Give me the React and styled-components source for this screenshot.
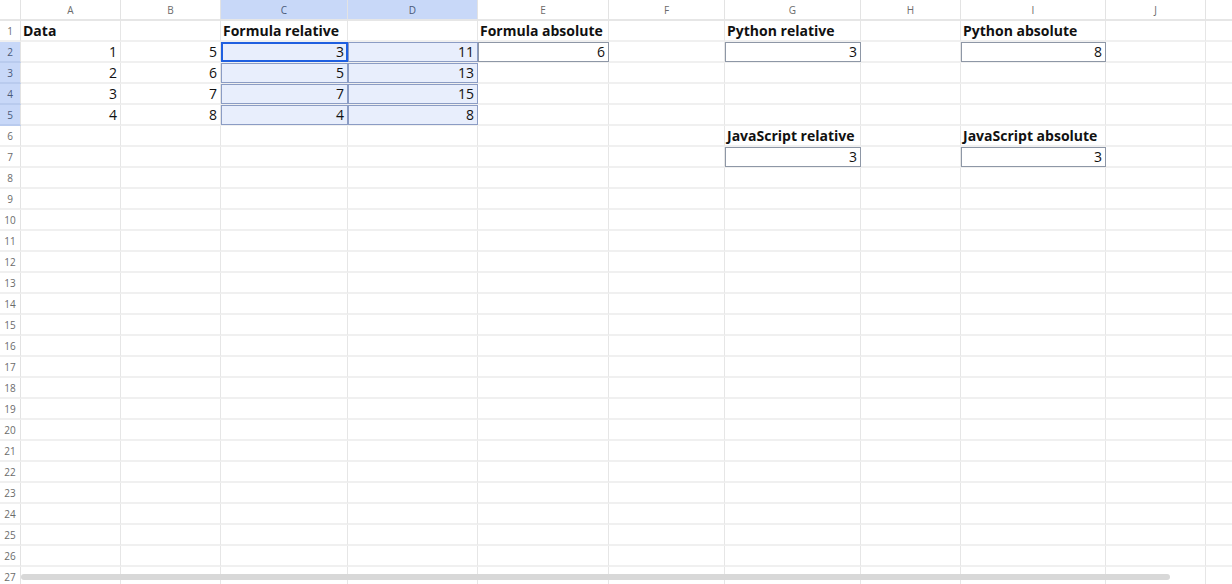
import React from 'react'
import styled, { createGlobalStyle } from 'styled-components'

const COLS = ['A', 'B', 'C', 'D', 'E', 'F', 'G', 'H', 'I', 'J', 'K']
const WIDTHS = [100, 100, 127, 130, 131, 116, 136, 100, 145, 100, 100]
const ROWS = 27
const SEL_COLS = ['C', 'D']
const SEL_ROWS = [2, 3, 4, 5]
// the header of K lies past the right edge of the window
const HIDDEN_LABELS = ['K']

// sheet contents, keyed by cell name
const cells = {
  A1: { v: 'Data', bold: true },
  C1: { v: 'Formula relative', bold: true },
  E1: { v: 'Formula absolute', bold: true },
  G1: { v: 'Python relative', bold: true },
  I1: { v: 'Python absolute', bold: true },
  A2: { v: 1 }, B2: { v: 5 }, C2: { v: 3, boxed: true }, D2: { v: 11, boxed: true },
  E2: { v: 6, boxed: true }, G2: { v: 3, boxed: true }, I2: { v: 8, boxed: true },
  A3: { v: 2 }, B3: { v: 6 }, C3: { v: 5, boxed: true }, D3: { v: 13, boxed: true },
  A4: { v: 3 }, B4: { v: 7 }, C4: { v: 7, boxed: true }, D4: { v: 15, boxed: true },
  A5: { v: 4 }, B5: { v: 8 }, C5: { v: 4, boxed: true }, D5: { v: 8, boxed: true },
  G6: { v: 'JavaScript relative', bold: true },
  I6: { v: 'JavaScript absolute', bold: true },
  G7: { v: 3, boxed: true }, I7: { v: 3, boxed: true },
}

const ACTIVE = 'C2'

function App() {
  const rows = Array.from({ length: ROWS }, (_, i) => i + 1)
  return (
    <>
      <GlobalStyle />
      <Sheet>
        <Grid>
          <Corner />
          {COLS.map((c) => (
            <ColHead key={c} $sel={SEL_COLS.includes(c)}>
              {HIDDEN_LABELS.includes(c) ? '' : c}
            </ColHead>
          ))}
          {rows.map((r) => (
            <React.Fragment key={r}>
              <RowHead $sel={SEL_ROWS.includes(r)}>{r}</RowHead>
              {COLS.map((c) => {
                const name = c + r
                const cell = cells[name]
                const sel = SEL_COLS.includes(c) && SEL_ROWS.includes(r)
                return (
                  <Cell
                    key={name}
                    $sel={sel}
                    $bold={cell?.bold}
                    $num={typeof cell?.v === 'number'}
                    $boxed={cell?.boxed}
                    $active={name === ACTIVE}
                  >
                    {cell?.v}
                  </Cell>
                )
              })}
            </React.Fragment>
          ))}
        </Grid>
        <Scrollbar />
      </Sheet>
    </>
  )
}

const GlobalStyle = createGlobalStyle`
  html, body {
    margin: 0;
    padding: 0;
    background: #fff;
    overflow: hidden;
  }
  body {
    font-family: "Open Sans", "Noto Sans", sans-serif;
    -webkit-font-smoothing: antialiased;
  }
`

const Sheet = styled.div`
  position: relative;
  width: 1232px;
  height: 584px;
  overflow: hidden;
  background: #fff;
`

const Grid = styled.div`
  display: grid;
  grid-template-columns: 21px ${WIDTHS.map((w) => w + 'px').join(' ')};
  grid-auto-rows: 21px;
`

const Corner = styled.div`
  border-right: 1px solid #e3e3e3;
  border-bottom: 2px solid #e6e6e6;
  box-sizing: border-box;
`

const ColHead = styled.div`
  display: flex;
  align-items: center;
  justify-content: center;
  font-size: 10px;
  color: ${({ $sel }) => ($sel ? '#4a5a78' : '#6b6b6b')};
  background: ${({ $sel }) => ($sel ? '#c8d8f8' : '#fff')};
  border-right: 1px solid #e3e3e3;
  border-bottom: 2px solid #e6e6e6;
  box-sizing: border-box;
`

const RowHead = styled.div`
  display: flex;
  align-items: center;
  justify-content: center;
  font-size: 10px;
  color: ${({ $sel }) => ($sel ? '#4a5a78' : '#6b6b6b')};
  background: ${({ $sel }) => ($sel ? '#c8d8f8' : '#fff')};
  border-right: 1px solid #e3e3e3;
  border-bottom: 2px solid ${({ $sel }) => ($sel ? '#b9cbee' : '#f0f0f0')};
  box-sizing: border-box;
`

const Cell = styled.div`
  position: relative;
  display: flex;
  align-items: center;
  justify-content: ${({ $num }) => ($num ? 'flex-end' : 'flex-start')};
  padding: 0 3px 0 2px;
  font-size: 14px;
  font-weight: ${({ $bold }) => ($bold ? 700 : 400)};
  color: #111;
  white-space: nowrap;
  background: ${({ $sel }) => ($sel ? '#e8eefc' : '#fff')};
  border-right: 1px solid #e6e6e6;
  border-bottom: 2px solid #f0f0f0;
  box-sizing: border-box;
  min-width: 0;

  &::after {
    content: '';
    display: ${({ $boxed, $active }) => ($boxed || $active ? 'block' : 'none')};
    position: absolute;
    top: 0;
    left: 0;
    right: -1px;
    bottom: -1px;
    pointer-events: none;
    border: ${({ $active, $sel }) =>
      $active ? '2px solid #1f5fe0' : $sel ? '1px solid #8b9cc4' : '1px solid #8e97a6'};
    z-index: ${({ $active }) => ($active ? 2 : 1)};
  }
`

const Scrollbar = styled.div`
  position: absolute;
  left: 21px;
  top: 574px;
  width: 1149px;
  height: 6px;
  border-radius: 3px;
  background: #d8d8d8;
`

export default App
